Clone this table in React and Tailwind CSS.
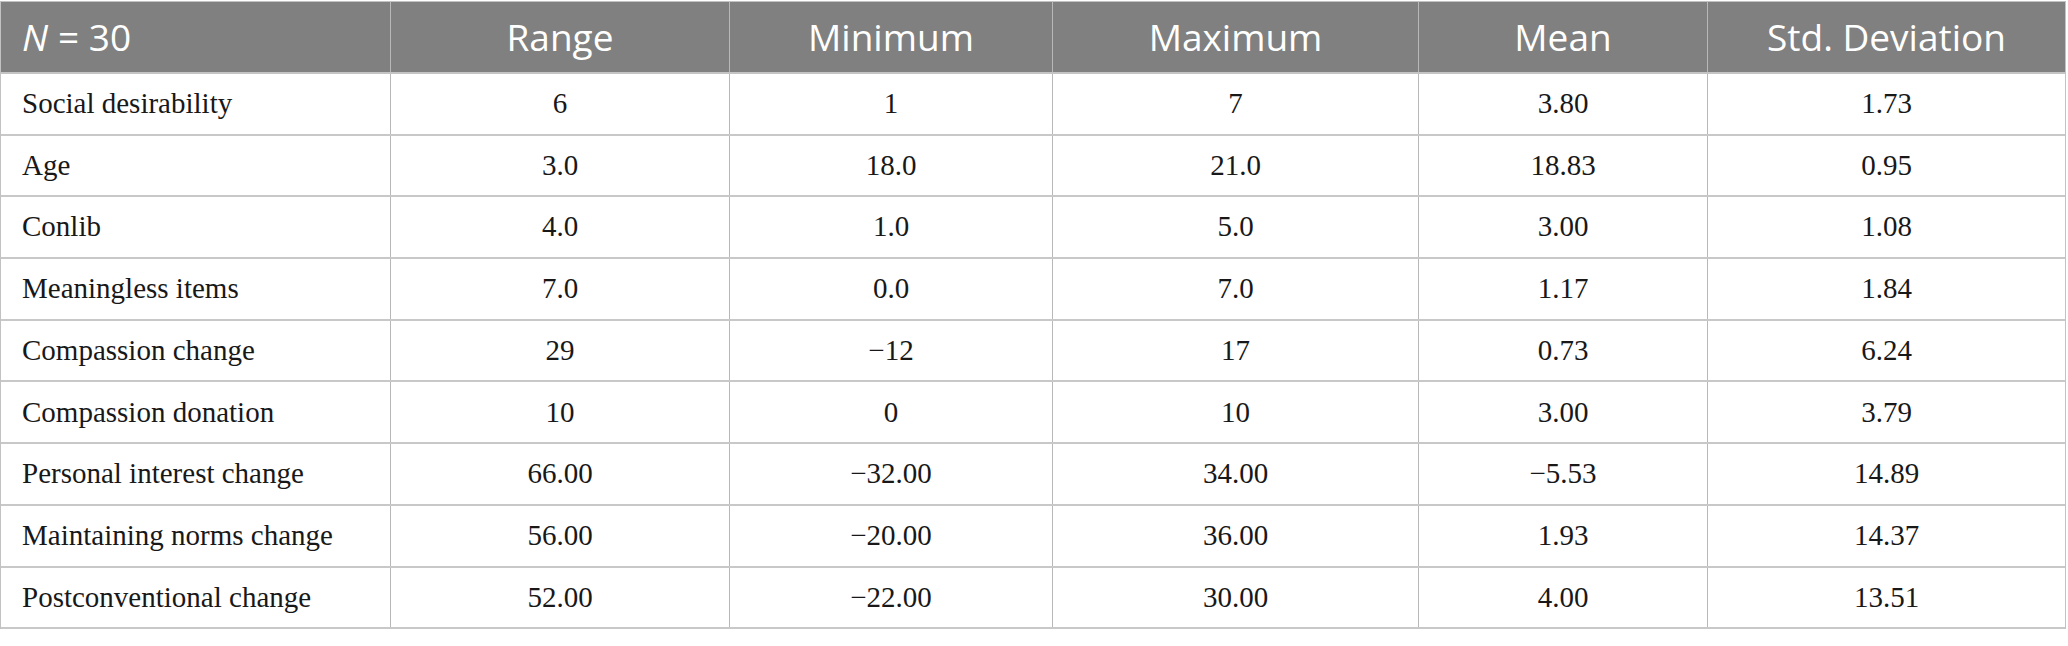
const headers = ["Range", "Minimum", "Maximum", "Mean", "Std. Deviation"];

const rows = [
  ["Social desirability", "6", "1", "7", "3.80", "1.73"],
  ["Age", "3.0", "18.0", "21.0", "18.83", "0.95"],
  ["Conlib", "4.0", "1.0", "5.0", "3.00", "1.08"],
  ["Meaningless items", "7.0", "0.0", "7.0", "1.17", "1.84"],
  ["Compassion change", "29", "\u221212", "17", "0.73", "6.24"],
  ["Compassion donation", "10", "0", "10", "3.00", "3.79"],
  ["Personal interest change", "66.00", "\u221232.00", "34.00", "\u22125.53", "14.89"],
  ["Maintaining norms change", "56.00", "\u221220.00", "36.00", "1.93", "14.37"],
  ["Postconventional change", "52.00", "\u221222.00", "30.00", "4.00", "13.51"],
];

const cols = "grid grid-cols-[390px_339px_323px_366px_289px_1fr]";

export default function App() {
  return (
    <div className="w-[2068px] h-[646px] bg-white pt-px">
      <div className="w-[2066px] border-t border-l border-r border-[#c2c2c2]">
        {/* header */}
        <div
          className={`${cols} h-[72px] bg-[#808080] text-white text-[37px] border-b-2 border-[#c4c4c4]`}
          style={{ fontFamily: '"Open Sans", sans-serif' }}
        >
          <div className="flex items-center pl-[21px] border-r border-[#b8b8b8]">
            <span className="italic">N</span>
            <span className="ml-[10px]">= 30</span>
          </div>
          {headers.map((h, i) => (
            <div
              key={h}
              className={`flex items-center justify-center ${i < headers.length - 1 ? "border-r border-[#b8b8b8]" : ""}`}
            >
              {h}
            </div>
          ))}
        </div>

        {/* body */}
        {rows.map((r) => (
          <div
            key={r[0]}
            className={`${cols} h-[61.7px] border-b-2 border-[#c8c8c8] text-[29px] text-[#181818]`}
            style={{ fontFamily: '"Liberation Serif", serif' }}
          >
            <div className="flex items-center pl-[21px] border-r border-[#b8b8b8]">{r[0]}</div>
            {r.slice(1).map((v, i) => (
              <div
                key={i}
                className={`flex items-center justify-center ${i < 4 ? "border-r border-[#b8b8b8]" : ""}`}
              >
                {v}
              </div>
            ))}
          </div>
        ))}
      </div>
    </div>
  );
}
